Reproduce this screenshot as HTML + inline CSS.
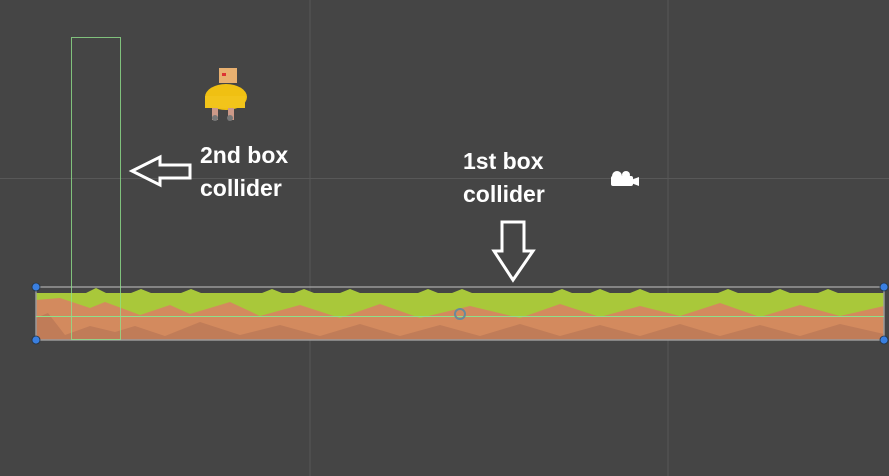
<!DOCTYPE html>
<html><head><style>
body{margin:0;width:889px;height:476px;background:#454545;overflow:hidden;position:relative;font-family:"Liberation Sans",sans-serif}
.t{position:absolute;color:#fff;font-weight:bold;font-size:23px;line-height:33px}
</style></head><body>
<svg width="889" height="476" style="position:absolute;left:0;top:0">
<line x1="310" y1="0" x2="310" y2="476" stroke="#565656"/>
<line x1="668" y1="0" x2="668" y2="476" stroke="#565656"/>
<line x1="0" y1="178.5" x2="889" y2="178.5" stroke="#585858"/>
<rect x="36" y="293" width="848" height="47" fill="#a9c83a"/>
<polygon points="36,300 60,298 90,308 105,302 140,315 170,305 190,314 230,302 260,316 300,305 340,318 380,304 420,318 470,306 520,318 560,304 600,317 640,306 680,316 720,303 760,317 800,305 840,316 884,306 884,340 36,340" fill="#d38a5e"/>
<polygon points="36,318 48,313 65,335 90,326 115,332 135,326 165,336 200,322 240,335 280,325 320,336 360,324 400,336 440,325 480,336 520,324 560,336 600,325 640,336 680,324 720,336 760,325 800,336 840,324 884,334 884,340 36,340" fill="#c07c58"/>
<g fill="#a9c83a">
<polygon points="86,293 96,288 106,293"/><polygon points="131,293 141,289 151,293"/><polygon points="181,293 191,289 201,293"/><polygon points="262,293 272,289 282,293"/><polygon points="294,293 304,289 314,293"/><polygon points="340,293 350,289 360,293"/><polygon points="418,293 428,289 438,293"/><polygon points="452,293 462,289 472,293"/><polygon points="552,293 562,289 572,293"/><polygon points="590,293 600,289 610,293"/><polygon points="630,293 640,289 650,293"/><polygon points="718,293 728,289 738,293"/><polygon points="770,293 780,289 790,293"/><polygon points="818,293 828,289 838,293"/>
</g>
<rect x="36" y="287" width="848" height="53" fill="none" stroke="#9a9a9a" stroke-width="1.5"/>
<line x1="36" y1="316.5" x2="884" y2="316.5" stroke="#8ee08a" stroke-width="1"/>
<rect x="71.5" y="37.5" width="49" height="302" fill="none" stroke="#8ee08a" opacity=".8"/>
<circle cx="460" cy="314" r="5" fill="none" stroke="#6a8a9a" stroke-width="2"/>
<g fill="#3a7fe0" stroke="#234" stroke-width=".8">
<circle cx="36" cy="287" r="4"/><circle cx="36" cy="340" r="4"/><circle cx="884" cy="287" r="4"/><circle cx="884" cy="340" r="4"/>
</g>
<polygon points="132,171 160,157 160,165 190,165 190,178 160,178 160,185" fill="none" stroke="#fff" stroke-width="3"/>
<polygon points="502,222 524,222 524,251 533,251 513,280 494,251 502,251" fill="none" stroke="#fff" stroke-width="3"/>
<g fill="#fff"><circle cx="617" cy="176" r="5"/><circle cx="626" cy="175" r="4"/><rect x="611" y="176" width="22" height="10" rx="2"/><polygon points="631,180 639,177 639,186 631,183"/></g>
<rect x="219" y="68" width="18" height="15" fill="#e8b070"/>
<rect x="222" y="73" width="4" height="3" fill="#d33"/>
<ellipse cx="226" cy="97" rx="21" ry="13" fill="#f0c012"/>
<rect x="205" y="96" width="40" height="12" fill="#f2c41a"/>
<rect x="212" y="108" width="6" height="12" fill="#c98"/><rect x="228" y="108" width="6" height="12" fill="#c98"/>
<circle cx="215" cy="118" r="3" fill="#777"/><circle cx="230" cy="118" r="3" fill="#777"/>
</svg>
<div class="t" style="left:200px;top:139px">2nd box<br>collider</div>
<div class="t" style="left:463px;top:145px">1st box<br>collider</div>
</body></html>
